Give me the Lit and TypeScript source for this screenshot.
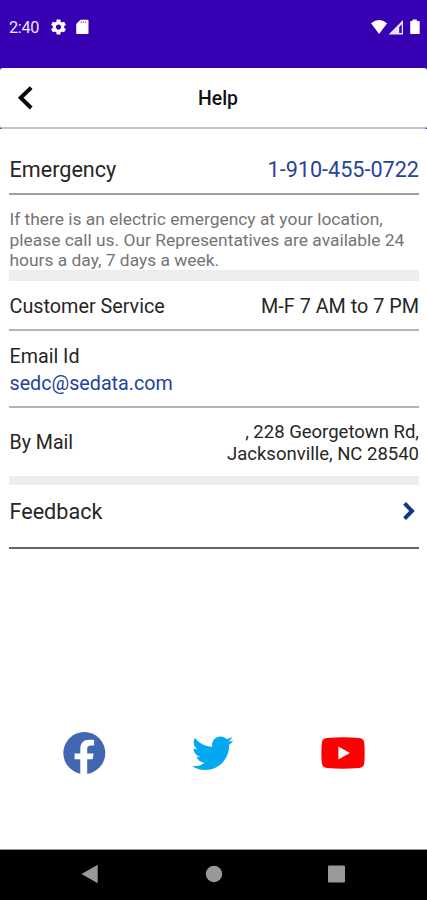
import { LitElement, html, css } from "lit";
import { customElement } from "lit/decorators.js";

@customElement("app-root")
export class AppRoot extends LitElement {
  static styles = css`
    :host {
      display: flex;
      flex-direction: column;
      box-sizing: border-box;
      width: 100%;
      height: 900px;
      background: #fff;
      overflow: hidden;
      color: #262626;
      font-family: Roboto, "Noto Sans", sans-serif;
      white-space: nowrap;
    }
    svg { display: block; flex: none; }
    .status {
      flex: none;
      height: 68px;
      box-sizing: border-box;
      padding: 18px 6px 0 9px;
      display: flex;
      align-items: flex-start;
      background: #3700b3;
      color: #eee8ff;
    }
    .clock { font-size: 16.3px; line-height: 20px; width: 42px; letter-spacing: -0.3px; }
    .gear { margin-top: 1px; }
    .grow { flex: 1; }
    .header-wrap { flex: none; height: 61px; background: #2c3a9c; }
    .header {
      height: 61px;
      box-sizing: border-box;
      background: #fff;
      border-bottom: 2px solid #c3c5d0;
      border-radius: 3px;
      display: grid;
      grid-template-columns: 60px 1fr 60px;
      align-items: center;
    }
    .back { margin: 1px 0 0 17px; }
    .title { text-align: center; font-weight: 500; font-size: 19.4px; color: #111; padding: 2px 0 0 9px; line-height: 22px; }
    .content { flex: 1; padding: 0 8px 0 9px; }
    .row {
      display: flex;
      align-items: center;
      justify-content: space-between;
      box-sizing: border-box;
      border-bottom: 2px solid #b4b4b4;
    }
    .label { margin-left: 0.5px; }
    .emergency { height: 66px; padding-top: 17px; font-size: 21.6px; border-color: #a0a0a0; }
    .service { height: 50px; padding-top: 3px; font-size: 19.8px; }
    .email { height: 77px; padding-top: 2px; flex-direction: column; align-items: flex-start; justify-content: center; font-size: 19.7px; line-height: 27px; }
    .mail { height: 68px; border: 0; padding-top: 1px; font-size: 19.6px; }
    .address { text-align: right; font-size: 18.5px; line-height: 22px; }
    .feedback { height: 64px; font-size: 21.6px; border-color: #666; padding-bottom: 10px; }
    .link { color: #25439c; }
    .note { height: 75px; box-sizing: border-box; padding: 14px 0 0 0.5px; color: #747474; font-size: 17.4px; line-height: 20.5px; }
    .band { height: 11px; background: #ededed; }
    .thin { height: 9px; }
    .chev { margin-right: 3px; }
    .socials { flex: none; height: 118px; display: flex; align-items: flex-start; padding-left: 62px; }
    .fb { margin-right: 86px; }
    .tw { margin-right: 87px; }
    .nav {
      flex: none;
      height: 51px;
      box-sizing: border-box;
      border-top: 1px solid #999;
      background: #000;
      display: flex;
      align-items: center;
      padding: 0 0 2px 81px;
    }
    .navback { margin-right: 107px; }
    .home { margin-right: 105px; }
  `;

  private statusIcons() {
    return html`
      <svg class="gear" width="15" height="16" viewBox="2 2 20 20" fill="#fff">
        <path d="M19.43 12.98c.04-.32.07-.64.07-.98s-.03-.66-.07-.98l2.11-1.65c.19-.15.24-.42.12-.64l-2-3.46c-.12-.22-.39-.3-.61-.22l-2.49 1c-.52-.4-1.08-.73-1.69-.98l-.38-2.65C14.46 2.18 14.25 2 14 2h-4c-.25 0-.46.18-.49.42l-.38 2.65c-.61.25-1.17.59-1.69.98l-2.49-1c-.23-.09-.49 0-.61.22l-2 3.46c-.13.22-.07.49.12.64l2.11 1.65c-.04.32-.07.65-.07.98s.03.66.07.98l-2.11 1.65c-.19.15-.24.42-.12.64l2 3.46c.12.22.39.3.61.22l2.49-1c.52.4 1.08.73 1.69.98l.38 2.65c.03.24.24.42.49.42h4c.25 0 .46-.18.49-.42l.38-2.65c.61-.25 1.17-.59 1.69-.98l2.49 1c.23.09.49 0 .61-.22l2-3.46c.12-.22.07-.49-.12-.64l-2.11-1.65zM12 15.500c-1.930 0-3.500-1.570-3.500-3.500s1.570-3.500 3.500-3.500 3.500 1.570 3.500 3.500-1.570 3.500-3.500 3.500z"/>
      </svg>
      <svg width="24" height="18" viewBox="0 0 24 18">
        <path fill="#fff" d="M14.500 1.700h6.800q1.200 0 1.200 1.200v12q0 1.200-1.200 1.200h-9.900q-1.200 0-1.200-1.200V6z"/>
        <path stroke="#9a7cdc" stroke-width="1.200" d="M15.200 3.200v2M17.400 3.200v2M19.600 3.200v2"/>
      </svg>`;
  }

  render() {
    return html`
      <div class="status">
        <span class="clock">2:40</span>
        ${this.statusIcons()}
        <span class="grow"></span>
        <svg width="51" height="18" viewBox="0 0 51 18" fill="#fff">
          <path d="M1 5.200Q9-1.200 17.100 5.200L9.100 16z"/>
          <path fill="#e9e1fa" fill-rule="evenodd" d="M33 2v14.400H18.600zM31.700 6.200l-2.500 2.800v6h2.500z"/>
          <path d="M42.500 1.400h4.300v1.500h2q.9 0 .9.900v11.400q0 .9-.9.900h-7.700q-.9 0-.9-.9V3.800q0-.9.9-.9h1.400z"/>
        </svg>
      </div>
      <div class="header-wrap">
        <div class="header">
          <svg class="back" width="18" height="26" viewBox="0 0 18 26">
            <path d="M14.200 2.600L3.700 12.800l10.500 10.200" fill="none" stroke="#0b0b0b" stroke-width="4"/>
          </svg>
          <span class="title">Help</span>
        </div>
      </div>
      <div class="content">
        <div class="row emergency"><span class="label">Emergency</span><span class="link">1-910-455-0722</span></div>
        <div class="note">If there is an electric emergency at your location,<br>please call us. Our Representatives are available 24<br>hours a day, 7 days a week.</div>
        <div class="band"></div>
        <div class="row service"><span class="label">Customer Service</span><span>M-F 7 AM to 7 PM</span></div>
        <div class="row email"><span class="label">Email Id</span><span class="link label">sedc@sedata.com</span></div>
        <div class="row mail"><span class="label">By Mail</span><span class="address">, 228 Georgetown Rd,<br>Jacksonville, NC 28540</span></div>
        <div class="band thin"></div>
        <div class="row feedback">
          <span class="label">Feedback</span>
          <svg class="chev" width="14" height="20" viewBox="0 0 14 20">
            <path d="M2.600 2.300L10 10l-7.400 7.700" fill="none" stroke="#14358f" stroke-width="4"/>
          </svg>
        </div>
      </div>
      <div class="socials">
        <svg class="fb" width="44" height="44" viewBox="0 0 44 44">
          <circle cx="22.300" cy="22" r="21" fill="#4267b2"/>
          <path fill="#fff" d="M18.300 43.500V28.200h-5.700v-5.800h5.700v-4.200c0-6.300 3.100-9.500 9.300-9.500 1.700 0 3.100.1 4.500.4v5.400h-3.200c-2.800 0-3.700 1.300-3.700 3.600v4.300h6.400l-1 5.800h-5.400v15.300z"/>
        </svg>
        <svg class="tw" width="42" height="44" viewBox="0 0 42 44">
          <g transform="translate(0 1.600) scale(1.720 1.720)"><path fill="#03a9f0" d="M23.954 4.569c-.885.389-1.830.654-2.825.775 1.014-.611 1.794-1.574 2.163-2.723-.951.555-2.005.959-3.127 1.184-.896-.959-2.173-1.559-3.591-1.559-2.717 0-4.920 2.203-4.920 4.917 0 .39.045.765.127 1.124C7.691 8.094 4.066 6.130 1.640 3.161c-.427.722-.666 1.561-.666 2.475 0 1.710.870 3.213 2.188 4.096-.807-.026-1.566-.248-2.228-.616v.061c0 2.385 1.693 4.374 3.946 4.827-.413.111-.849.171-1.296.171-.314 0-.615-.030-.916-.086.631 1.953 2.445 3.377 4.604 3.417-1.680 1.319-3.809 2.105-6.102 2.105-.390 0-.779-.023-1.170-.067 2.189 1.394 4.768 2.209 7.557 2.209 9.054 0 13.999-7.496 13.999-13.986 0-.209 0-.420-.015-.630.961-.689 1.800-1.560 2.460-2.548z"/></g>
        </svg>
        <svg width="44" height="44" viewBox="0 0 44 44">
          <path fill="#f00" d="M6 7Q22 5.500 38 7q5 .4 5.300 5 .8 10 0 20-.4 4.600-5.300 5-16 1.400-32 0-4.700-.4-5.200-5-.8-10 0-20Q1.300 7.400 6 7z"/>
          <path fill="#fff" d="M17.400 15.500v13l11.400-6.500z"/>
        </svg>
      </div>
      <div class="nav">
        <svg class="navback" width="17" height="20" viewBox="0 0 17 20"><path d="M16.700.8v18.400L.5 10z" fill="#999"/></svg>
        <svg class="home" width="18" height="18" viewBox="0 0 18 18"><circle cx="9" cy="9" r="8.200" fill="#999"/></svg>
        <svg width="17" height="18" viewBox="0 0 17 18"><rect y=".5" width="17" height="17" rx="1" fill="#999"/></svg>
      </div>`;
  }
}
